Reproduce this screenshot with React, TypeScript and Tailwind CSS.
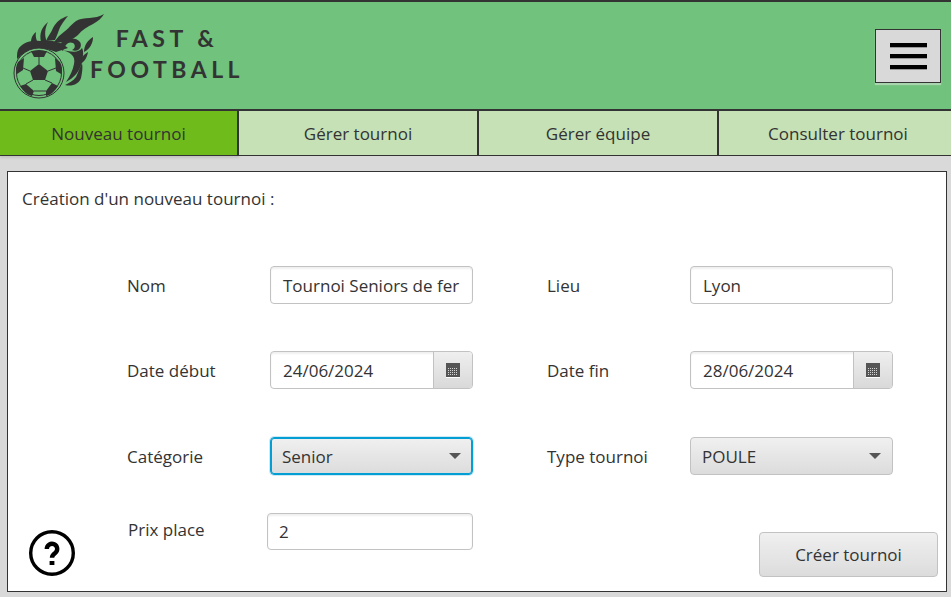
import React from 'react';

const labelClass = 'pt-[2px] text-[17px] text-[#333]';
const fieldClass = 'rounded-[4px] border border-[#c2c2c2] bg-white text-[17px] text-[#333] shadow-[inset_0_2px_2px_#f0f0f0]';
const green = '#70c27c';

function Logo() {
    return (
        <svg width="110" height="92" viewBox="0 0 110 92" className="shrink-0" fill="#333">
            {/* flame tongues, drawn behind the ball */}
            <path d="M94 4 C85 10 74 6 66 11 C60 16 57 20 49 26 L44 32 C53 34 62 30 68 25 C72 20 77 17 83 14 C88 11 92 8 94 4 Z" />
            <path d="M58 6 C51 8 46 12 43 18 C41 23 38 26 36 31 L45 30 C48 24 49 18 52 14 C54 11 56 8 58 6 Z" />
            <path d="M38 12 C32 17 29 23 31 32 L37 32 C34 25 35 18 38 12 Z" />
            <path d="M26 22 C21 26 20 31 22 38 L31 37 C27 32 25 28 26 22 Z" />
            <path d="M9 38 C14 32 21 30 30 31 C40 29 52 32 58 38 L46 42 C34 37 20 38 7 49 C7 44 7 41 9 38 Z" />
            <path d="M48 37 C53 28 65 26 70 32 C73 37 68 43 62 40 C65 39 66 35 63 33 C59 31 55 34 53 41 Z" />
            <path d="M50 40 C60 41 66 46 64 54 C63 60 60 66 56 72 C64 68 70 61 72 52 C73 46 74 42 72 38 C68 44 60 41 50 40 Z" />
            <path d="M83 27 C78 30 74 35 74 42 C80 39 83 33 83 27 Z" />
            <path d="M78 42 C73 45 70 49 68 55 C74 53 77 48 78 42 Z" />
            <path d="M72 53 C69 59 68 63 66 67 C63 71 59 73 55 75 C62 77 69 74 71 68 C72 63 73 58 72 53 Z" />
            <path d="M67 14 C64 16 62 18 61 21 C64 20 66 17 67 14 Z" />
            {/* ball */}
            <circle cx="29" cy="63" r="25" fill={green} stroke="#333" strokeWidth="1" />
            <circle cx="29" cy="63" r="22.5" fill="none" stroke="#333" strokeWidth="1" />
            <path d="M29 54 L38 61 L35 70 L23 70 L20 61 Z" />
            <path d="M21 41 L37 41 L34 47 L24 47 Z" />
            <path d="M8 52 L14 48 L13 60 L7 64 C5 60 6 56 8 52 Z" />
            <path d="M50 52 L45 48 L46 61 L51 64 C53 60 52 56 50 52 Z" />
            <path d="M10 76 L16 74 L24 81 L22 86 C17 85 13 81 10 76 Z" />
            <path d="M48 76 L42 73 L36 81 L36 86 C41 85 45 81 48 76 Z" />
            <path d="M29 47 V54 M38 61 L46 58 M20 61 L13 58 M23 70 L16 74 M35 70 L42 73 M24 81 H36" stroke="#333" strokeWidth="1" fill="none" />
        </svg>
    );
}

function DateField({ value }: { value: string }) {
    return (
        <div className={`${fieldClass} flex h-[38px] w-[203px]`}>
            <span className="flex-1 pl-[12px] leading-[38px]">{value}</span>
            <span className="flex w-[39px] items-center justify-center rounded-r-[3px] border-l border-[#c2c2c2] bg-linear-to-b from-[#efefef] to-[#d9d9d9]">
                <svg width="14" height="15" viewBox="0 0 14 15">
                    <rect width="14" height="14" fill="#555" />
                    <path d="M2 5.5h10M2 7.5h10M2 9.5h10M2 11.5h10" stroke="#d5d5d5" strokeWidth="1" strokeDasharray="1 1" />
                    <rect y="14" width="14" height="1" fill="#fff" />
                </svg>
            </span>
        </div>
    );
}

function Select({ value, focused }: { value: string; focused?: boolean }) {
    return (
        <div
            className={`flex h-[38px] w-[203px] items-center justify-between rounded-[4px] border bg-linear-to-b from-[#f0f0f0] to-[#dcdcdc] pl-[11px] pr-[11px] text-[17px] text-[#333] ${
                focused ? 'border-[#039ed3] shadow-[inset_0_0_0_1px_#039ed3,0_0_0_1px_#cdeaf5]' : 'border-[#c2c2c2]'
            }`}
        >
            <span className="pt-[2px]">{value}</span>
            <span className="h-0 w-0 border-x-[6px] border-t-[6px] border-x-transparent border-t-[#555]" />
        </div>
    );
}

function Tab({ label, active, width }: { label: string; active?: boolean; width: string }) {
    return (
        <div
            className={`flex h-[45px] shrink-0 items-center justify-center border-b border-r-2 border-[#333] pt-[2px] text-[17px] text-[#333] ${width} ${
                active ? 'bg-[#6fbb1c] shadow-[0_2px_2px_#c4c4c4]' : 'bg-[#c5e1b5]'
            }`}
        >
            {label}
        </div>
    );
}

export default function App() {
    return (
        <div className="flex h-[597px] w-[951px] flex-col overflow-hidden bg-[#d9d9d9] font-['Open_Sans',sans-serif]">
            <header className="flex h-[111px] shrink-0 items-center justify-between border-y-2 border-[#333] bg-[#70c27c] pl-[10px] pr-[10px]">
                <div className="flex items-center">
                    <Logo />
                    <div className="-ml-[30px] mb-[4px] w-[154px] text-center font-['Lato',sans-serif] text-[23px] font-bold leading-[31px] tracking-[4.5px] text-[#333]">
                        <div>FAST &amp;</div>
                        <div>FOOTBALL</div>
                    </div>
                </div>
                <button className="flex h-[54px] w-[66px] flex-col items-center justify-center gap-[7px] border border-[#333] bg-[#d9d9d9] shadow-[0_2px_1px_#a9d6ae]">
                    <span className="h-[4px] w-[37px] bg-black shadow-[0_1px_0_#999]" />
                    <span className="h-[4px] w-[37px] bg-black shadow-[0_1px_0_#999]" />
                    <span className="h-[4px] w-[37px] bg-black shadow-[0_1px_0_#999]" />
                </button>
            </header>
            <nav className="flex">
                <Tab label="Nouveau tournoi" active width="w-[239px]" />
                <Tab label="Gérer tournoi" width="w-[240px]" />
                <Tab label="Gérer équipe" width="w-[240px]" />
                <Tab label="Consulter tournoi" width="w-[240px]" />
            </nav>
            <main className="ml-[7px] mr-[4px] mt-[15px] h-[421px] border border-[#333] bg-white">
                <p className="pl-[14px] pt-[15px] text-[17px] leading-[24px] text-[#333]">Création d'un nouveau tournoi :</p>
                <div className="ml-[119px] mt-[55px] grid grid-cols-[143px_203px_74px_143px_203px] grid-rows-[38px_38px_39px] items-end gap-y-[47px]">
                    <span className={`${labelClass} leading-[36px]`}>Nom</span>
                    <div className={`${fieldClass} h-[38px] w-[203px] overflow-hidden whitespace-nowrap pl-[12px] leading-[38px]`}>Tournoi Seniors de fer</div>
                    <span />
                    <span className={`${labelClass} leading-[36px]`}>Lieu</span>
                    <div className={`${fieldClass} h-[38px] w-[203px] pl-[12px] leading-[38px]`}>Lyon</div>

                    <span className={`${labelClass} leading-[36px]`}>Date début</span>
                    <DateField value="24/06/2024" />
                    <span />
                    <span className={`${labelClass} leading-[36px]`}>Date fin</span>
                    <DateField value="28/06/2024" />

                    <span className={`${labelClass} leading-[36px]`}>Catégorie</span>
                    <Select value="Senior" focused />
                    <span />
                    <span className={`${labelClass} leading-[36px]`}>Type tournoi</span>
                    <Select value="POULE" />
                </div>
                <div className="mt-[38px] flex items-start">
                    <svg width="48" height="48" viewBox="0 0 24 24" fill="none" stroke="#000" className="ml-[20px] mt-[16px] shrink-0">
                        <circle cx="12" cy="12" r="10.65" strokeWidth="1.7" />
                        <path d="M9.4 10a2.6 2.6 0 1 1 4.2 2c-1 .8-1.6 1.2-1.6 2.4" strokeWidth="2.2" />
                        <path d="M12 16v2" strokeWidth="2.4" />
                    </svg>
                    <span className={`${labelClass} ml-[52px] mt-[2px] w-[139px]`}>Prix place</span>
                    <div className={`${fieldClass} h-[37px] w-[206px] pl-[11px] leading-[35px]`}>2</div>
                    <button className="ml-auto mr-[8px] mt-[19px] h-[45px] w-[179px] rounded-[4px] border border-[#c2c2c2] bg-linear-to-b from-[#f0f0f0] to-[#dcdcdc] pt-[1px] text-[17px] text-[#333]">
                        Créer tournoi
                    </button>
                </div>
            </main>
        </div>
    );
}
